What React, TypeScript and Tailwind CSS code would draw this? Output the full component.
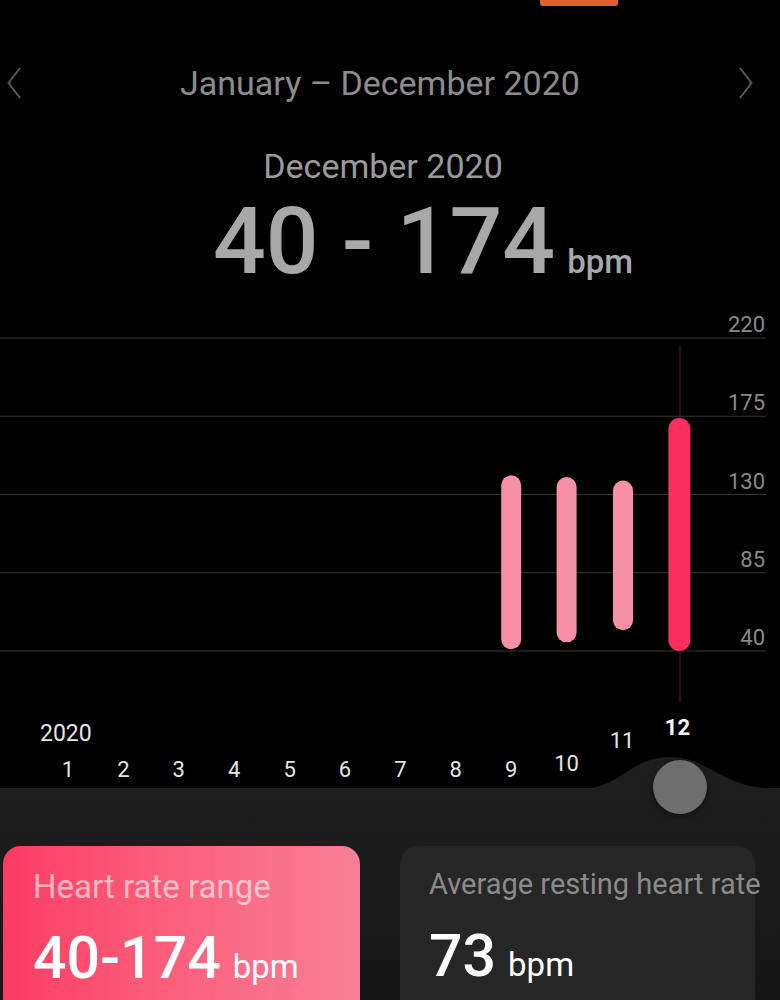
import React from 'react';

const months = [1, 2, 3, 4, 5, 6, 7, 8, 9, 10, 11, 12];

const ranges = [
  { month: 9, min: 41, max: 141 },
  { month: 10, min: 45, max: 140 },
  { month: 11, min: 52, max: 138 },
  { month: 12, min: 40, max: 174 },
];

const gridValues = [220, 175, 130, 85, 40];

// chart geometry (svg coords)
const yFor = (v: number) => 341 - (v - 40) * (313 / 180);
const xFor = (m: number) => 68 + (m - 1) * 55.4;

// month label baselines follow the slider curve near the end
const labelY: Record<number, number> = { 10: 461, 11: 438, 12: 425 };

const Chevron = ({ dir }: { dir: 'left' | 'right' }) => (
  <svg width="14" height="32" viewBox="0 0 14 32" fill="none">
    {dir === 'left' ? (
      <path d="M13 1 L1.5 16 L13 31" stroke="#5a5a5a" strokeWidth="2" />
    ) : (
      <path d="M1 1 L12.5 16 L1 31" stroke="#5a5a5a" strokeWidth="2" />
    )}
  </svg>
);

const Chart = () => (
  <svg width="780" height="478" viewBox="0 0 780 478" className="block">
    {gridValues.map((v) => (
      <g key={v}>
        <line x1="0" x2="766" y1={yFor(v)} y2={yFor(v)} stroke="#343434" strokeWidth="1" />
        <text
          x="765"
          y={yFor(v) - 6}
          textAnchor="end"
          fill="#8a8a8a"
          fontSize="22"
          fontFamily="Roboto, sans-serif"
        >
          {v}
        </text>
      </g>
    ))}
    <line x1="680" x2="680" y1="35" y2="392" stroke="#5c1a2a" strokeWidth="1" />
    {ranges.map((r) => {
      const active = r.month === 12;
      const w = active ? 22 : 20;
      const top = yFor(r.max);
      const bottom = yFor(r.min);
      return (
        <rect
          key={r.month}
          x={xFor(r.month) + (r.month === 12 ? 2 : r.month === 11 ? 1 : 0) - w / 2}
          y={top}
          width={w}
          height={bottom - top}
          rx={w / 2}
          fill={active ? '#fa2f60' : '#f590a6'}
        />
      );
    })}
    <text x="40" y="431" fill="#e6e6e6" fontSize="23" fontFamily="Roboto, sans-serif">
      2020
    </text>
    {months.map((m) => (
      <text
        key={m}
        x={xFor(m)}
        y={labelY[m] ?? 467}
        textAnchor="middle"
        fill={m === 12 ? '#ffffff' : '#e6e6e6'}
        fontSize="22"
        fontWeight={m === 12 ? 700 : 400}
        fontFamily="Roboto, sans-serif"
      >
        {m}
      </text>
    ))}
  </svg>
);

const App = () => {
  return (
    <div className="w-[780px] h-[1000px] bg-black overflow-hidden font-['Roboto',sans-serif]">
      <div className="ml-[540px] w-[78px] h-[6px] rounded-b-[3px] bg-[#e2602f]" />

      <div className="mt-[61px] h-[32px] flex items-center justify-between pl-[7px] pr-[27px]">
        <Chevron dir="left" />
        <span className="text-[34px] leading-none text-[#8c8c8c]">January – December 2020</span>
        <Chevron dir="right" />
      </div>

      <div className="mt-[50px] text-center pr-[14px] text-[34px] leading-none text-[#9a9a9a]">
        December 2020
      </div>

      <div className="mt-[12px] pl-[213px] flex items-baseline text-[#a8a8a8]">
        <span className="text-[93px] leading-none font-medium">40 - 174</span>
        <span className="ml-[12px] text-[33px] leading-none font-medium">bpm</span>
      </div>

      <div className="mt-[22px]">
        <Chart />
      </div>

      <div className="relative h-[212px] bg-gradient-to-b from-[#1e1e1e] to-[#161616]">
        <svg
          width="200"
          height="34"
          viewBox="0 0 200 34"
          className="absolute right-0 -top-[33px]"
        >
          <path d="M0 34 C40 34 50 2 90 2 C130 2 140 34 200 34 Z" fill="#1e1e1e" />
        </svg>
        <div className="absolute left-[653px] -top-[28px] w-[54px] h-[54px] rounded-full bg-[#6e6e6e] shadow-[0_2px_6px_rgba(0,0,0,0.5)]" />

        <div className="flex gap-[40px] pl-[3px] pt-[58px]">
          <div className="w-[357px] h-[180px] shrink-0 rounded-[18px] bg-gradient-to-r from-[#fb3a63] to-[#f97f99] pl-[30px] pt-[24px]">
            <div className="text-[33px] leading-none text-white/60 whitespace-nowrap">Heart rate range</div>
            <div className="mt-[25px] flex items-baseline text-white">
              <span className="text-[59px] leading-none font-medium">40-174</span>
              <span className="ml-[12px] text-[33px] leading-none">bpm</span>
            </div>
          </div>
          <div className="w-[355px] h-[180px] shrink-0 rounded-[18px] bg-[#262626] pl-[29px] pt-[24px]">
            <div className="text-[29px] leading-none text-[#8a8a8a] whitespace-nowrap">
              Average resting heart rate
            </div>
            <div className="mt-[27px] flex items-baseline text-white">
              <span className="text-[59px] leading-none font-medium">73</span>
              <span className="ml-[12px] text-[33px] leading-none">bpm</span>
            </div>
          </div>
        </div>
      </div>
    </div>
  );
};

export default App;
